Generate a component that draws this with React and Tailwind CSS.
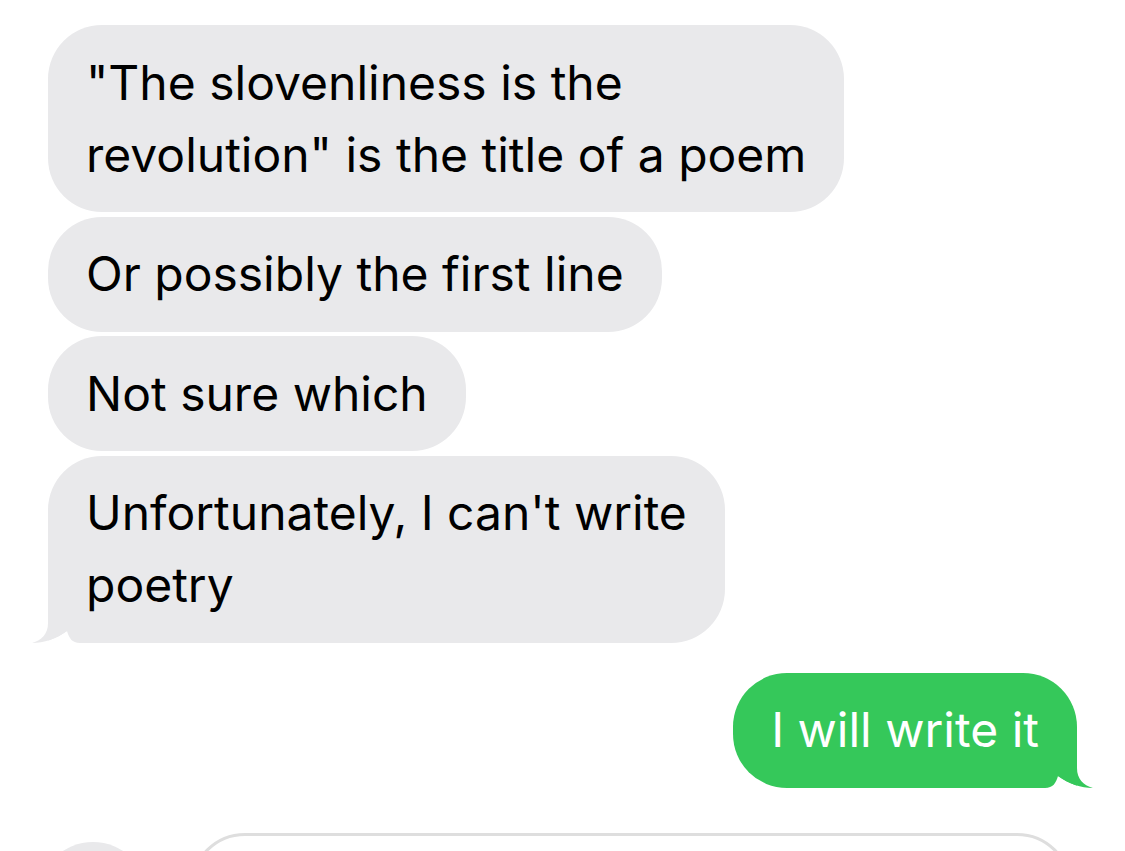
import React from "react";

const Tail = ({ side, fill }) => (
  <svg
    width="50"
    height="36"
    viewBox="0 0 50 36"
    className={`absolute bottom-0 ${side === "left" ? "left-[-18px] -scale-x-100" : "right-[-18px]"}`}
  >
    <path d="M0 36 C8 36 11 31 13 24 C24 32 36 36 48 36 L48 37 L0 37 Z" fill="#ffffff" />
    <path d="M32 0 L32 16 C32 27 38 33 48 36 C36 36 24 32 13 24 L13 0 Z" fill={fill} />
  </svg>
);

const Bubble = ({ children, tail, me }) => (
  <div
    className={`relative max-w-[800px] px-[38px] py-[21.5px] text-[48px] leading-[72px] rounded-[54px] ${
      me ? "self-end bg-[#35c85a] text-white" : "self-start bg-[#e9e9eb] text-black"
    } ${tail && me ? "rounded-br-none" : ""} ${tail && !me ? "rounded-bl-none" : ""}`}
  >
    {children}
    {tail && <Tail side={me ? "right" : "left"} fill={me ? "#35c85a" : "#e9e9eb"} />}
  </div>
);

export default function App() {
  return (
    <div className="w-[1125px] h-[851px] overflow-hidden bg-white font-['Inter',sans-serif] antialiased">
      <div className="flex flex-col gap-[4.5px] pt-[25px] px-[48px]">
        <Bubble>
          "The slovenliness is the
          <br />
          revolution" is the title of a poem
        </Bubble>
        <Bubble>Or possibly the first line</Bubble>
        <Bubble>Not sure which</Bubble>
        <Bubble tail>
          Unfortunately, I can't write
          <br />
          poetry
        </Bubble>
        <div className="mt-[25.5px] flex justify-end">
          <Bubble me tail>I will write it</Bubble>
        </div>
      </div>

      <div className="flex items-start gap-[42px] pl-[38px] mt-[45px]">
        <div className="mt-[9px] w-[110px] h-[110px] rounded-full bg-[#e9e9eb] shrink-0" />
        <div className="w-[882px] h-[110px] rounded-[55px] border-[3px] border-[#dedede]" />
      </div>
    </div>
  );
}
